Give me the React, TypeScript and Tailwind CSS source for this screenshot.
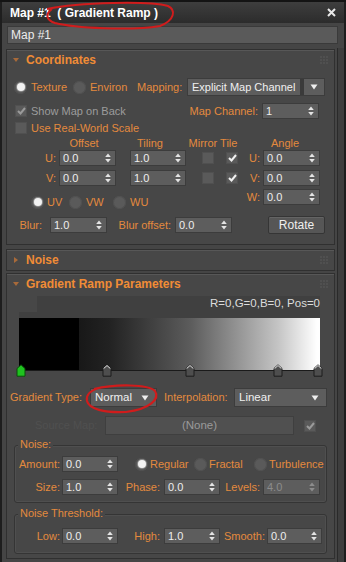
import React from "react";

const LBL = "shrink-0 text-right text-[#e48a3e]";

function Arrows({ dim }: { dim?: boolean }) {
  return (
    <svg width="6" height="10" viewBox="0 0 6 10" className="shrink-0">
      <path d="M3 0.5 L5.8 4 L0.2 4 Z M0.2 6 L5.8 6 L3 9.5 Z" fill={dim ? "#8c8c8c" : "#e4e4e4"} />
    </svg>
  );
}

function Spin({ v, cls, dim }: { v: string; cls: string; dim?: boolean }) {
  return (
    <div
      className={`flex h-[16px] shrink-0 items-center justify-between border border-[#3c3c3c] bg-[#5d5d5d] pl-[3px] pr-[4px] ${cls}`}
    >
      <span className={dim ? "text-[#8c8c8c]" : "text-[#eeeeee]"}>{v}</span>
      <Arrows dim={dim} />
    </div>
  );
}

function Drop({ v, cls }: { v: string; cls: string }) {
  return (
    <div
      className={`flex h-[19px] shrink-0 items-center whitespace-nowrap border border-[#3c3c3c] bg-[#5d5d5d] pl-[4px] text-[11.5px] text-[#f0f0f0] ${cls}`}
    >
      <span className="flex-1">{v}</span>
      <svg width="8" height="6" viewBox="0 0 8 6" className="mr-[7px] shrink-0">
        <path d="M0.5 0.5 L7.5 0.5 L4 5.5 Z" fill="#eeeeee" />
      </svg>
    </div>
  );
}

function Radio({ on }: { on?: boolean }) {
  return (
    <div className="flex h-[13px] w-[13px] shrink-0 items-center justify-center rounded-full bg-[#5a5a5a] shadow-[inset_0_0_0_1px_#505050]">
      {on && <div className="h-[8px] w-[8px] rounded-full bg-[#f2f2f2] shadow-[0_0_0_1px_#8a8a8a]" />}
    </div>
  );
}

function Check({ on, dim }: { on?: boolean; dim?: boolean }) {
  return (
    <div className="flex h-[12px] w-[12px] shrink-0 items-center justify-center bg-[#5a5a5a] shadow-[inset_0_0_0_1px_#505050]">
      {on && (
        <svg width="9" height="8" viewBox="0 0 9 8">
          <path
            d="M1 4 L3.5 6.5 L8 1"
            fill="none"
            stroke={dim ? "#9a9a9a" : "#f0f0f0"}
            strokeWidth="2"
          />
        </svg>
      )}
    </div>
  );
}

function Grip() {
  return (
    <svg width="8" height="8" viewBox="0 0 8 8" className="mr-[6px]">
      {[1, 4, 7].map((x) =>
        [1, 4, 7].map((y) => <rect key={`${x}-${y}`} x={x - 0.5} y={y - 0.5} width="1" height="1" fill="#6e6e6e" />)
      )}
    </svg>
  );
}

function Rollout({
  title,
  open,
  cls,
  children,
}: {
  title: string;
  open?: boolean;
  cls: string;
  children?: React.ReactNode;
}) {
  return (
    <div
      className={`ml-[4px] w-[329px] shrink-0 border border-[#303030] bg-[#474747] shadow-[inset_0_1px_0_#575757] ${cls}`}
    >
      <div className="flex h-[20px] items-center">
        <svg width="6" height="6" viewBox="0 0 6 6" className="ml-[6px] shrink-0">
          {open ? (
            <path d="M0 1 L6 1 L3 5 Z" fill="#a86a3a" />
          ) : (
            <path d="M1 0 L5 3 L1 6 Z" fill="#a86a3a" />
          )}
        </svg>
        <span className="ml-[7px] text-[12px] font-bold text-[#f08c36]">{title}</span>
        <div className="flex-1" />
        <Grip />
      </div>
      {children}
    </div>
  );
}

function Flag({ green }: { green?: boolean }) {
  return (
    <svg width="10" height="13" viewBox="0 0 10 13">
      <path
        d="M1 4.5 L5 0.8 L9 4.5 L9 12.2 L1 12.2 Z"
        fill={green ? "#1fc21f" : "#4e4e4e"}
        stroke={green ? "#0b4d0b" : "#1c1c1c"}
        strokeWidth="1"
      />
      {!green && <path d="M1.6 4.6 L5 1.5 L8.4 4.6" fill="none" stroke="#e8e8e8" strokeWidth="1" />}
    </svg>
  );
}

export default function App() {
  return (
    <div className="relative h-[562px] w-[346px] overflow-hidden bg-[#454545] font-['Liberation_Sans',Arial,sans-serif] text-[11px] leading-none">
      <div className="h-[2px] bg-[#141414]" />
      {/* title bar */}
      <div className="flex h-[21px] items-center border-x-2 border-[#1e1e1e] bg-gradient-to-b from-[#3e3e3e] to-[#2c2c2c]">
        <span className="ml-[8px] text-[12px] font-bold text-white">Map #1&nbsp;&nbsp;( Gradient Ramp )</span>
        <div className="flex-1" />
        <svg width="9" height="9" viewBox="0 0 9 9" className="mr-[8px]">
          <path d="M1 1 L8 8 M8 1 L1 8" stroke="#e8e8e8" strokeWidth="2" />
        </svg>
      </div>
      {/* name field */}
      <div className="h-[25px] border-x-2 border-[#1e1e1e] pt-[3px]">
        <div className="ml-[5px] flex h-[18px] w-[331px] items-center border border-[#3a3a3a] bg-[#5a5a5a] pl-[3px] text-[12px] text-[#ececec]">
          Map #1
        </div>
      </div>

      <div className="flex h-[514px] border-l-2 border-[#1e1e1e]">
        <div className="w-[332px] shrink-0">
          {/* Coordinates */}
          <Rollout title="Coordinates" open cls="mt-[1px]">
            <div className="mt-[8px] flex h-[18px] items-center pl-[7px]">
              <Radio on />
              <span className="ml-[4px] w-[40px] shrink-0 text-[#e48a3e]">Texture</span>
              <div className="ml-[2px]">
                <Radio />
              </div>
              <span className="ml-[4px] w-[40px] shrink-0 text-[#e48a3e]">Environ</span>
              <span className="ml-[7px] w-[46px] shrink-0 text-[#e48a3e]">Mapping:</span>
              <div className="ml-[4px] flex h-[18px] w-[138px] shrink-0 items-center whitespace-nowrap border border-[#3c3c3c] bg-[#5d5d5d] pl-[4px] text-[11px] text-[#f0f0f0]">
                <span className="flex-1">Explicit Map Channel</span>
                <div className="h-full w-[4px] bg-[#3a3a3a]" />
                <svg width="8" height="6" viewBox="0 0 8 6" className="mx-[6px] shrink-0">
                  <path d="M0.5 0.5 L7.5 0.5 L4 5.5 Z" fill="#eeeeee" />
                </svg>
              </div>
            </div>

            <div className="mt-[7px] flex h-[16px] items-center pl-[8px]">
              <Check on dim />
              <span className="ml-[4px] w-[120px] shrink-0 text-[#9c9c9c]">Show Map on Back</span>
              <span className={`${LBL} ml-[30px] w-[77px]`}>Map Channel:</span>
              <Spin v="1" cls="ml-[4px] w-[57px]" />
            </div>

            <div className="mt-[1px] flex h-[16px] items-center pl-[8px]">
              <Check />
              <span className="ml-[4px] shrink-0 text-[#e48a3e]">Use Real-World Scale</span>
            </div>

            <div className="flex h-[14px] items-center pl-[52px] text-[#e48a3e]">
              <span className="w-[50px] shrink-0 text-center">Offset</span>
              <span className="ml-[21px] w-[40px] shrink-0 text-center">Tiling</span>
              <span className="ml-[18px] w-[50px] shrink-0 text-center">Mirror Tile</span>
              <span className="ml-[27px] w-[40px] shrink-0 text-center">Angle</span>
            </div>

            <div className="flex h-[16px] items-center pl-[35px]">
              <span className={`${LBL} w-[14px]`}>U:</span>
              <Spin v="0.0" cls="ml-[3px] w-[57px]" />
              <Spin v="1.0" cls="ml-[14px] w-[56px]" />
              <div className="ml-[16px]">
                <Check />
              </div>
              <div className="ml-[12px]">
                <Check on />
              </div>
              <span className={`${LBL} ml-[8px] w-[14px]`}>U:</span>
              <Spin v="0.0" cls="ml-[3px] w-[57px]" />
            </div>

            <div className="mt-[4px] flex h-[16px] items-center pl-[35px]">
              <span className={`${LBL} w-[14px]`}>V:</span>
              <Spin v="0.0" cls="ml-[3px] w-[57px]" />
              <Spin v="1.0" cls="ml-[14px] w-[56px]" />
              <div className="ml-[16px]">
                <Check />
              </div>
              <div className="ml-[12px]">
                <Check on />
              </div>
              <span className={`${LBL} ml-[8px] w-[14px]`}>V:</span>
              <Spin v="0.0" cls="ml-[3px] w-[57px]" />
            </div>

            <div className="mt-[3px] flex h-[24px] items-start">
              <div className="mt-[6px] flex h-[14px] items-center pl-[24px] text-[#e48a3e]">
                <Radio on />
                <span className="ml-[3px] w-[18px] shrink-0">UV</span>
                <div className="ml-[4px]">
                  <Radio />
                </div>
                <span className="ml-[4px] w-[22px] shrink-0">VW</span>
                <div className="ml-[5px]">
                  <Radio />
                </div>
                <span className="ml-[4px] w-[22px] shrink-0">WU</span>
              </div>
              <div className="ml-[94px] flex h-[16px] items-center">
                <span className={`${LBL} w-[14px]`}>W:</span>
                <Spin v="0.0" cls="ml-[3px] w-[57px]" />
              </div>
            </div>

            <div className="mt-[3px] flex h-[18px] items-center pl-[5px]">
              <span className={`${LBL} w-[30px]`}>Blur:</span>
              <Spin v="1.0" cls="ml-[8px] w-[57px]" />
              <span className={`${LBL} ml-[6px] w-[58px]`}>Blur offset:</span>
              <Spin v="0.0" cls="ml-[4px] w-[57px]" />
              <div className="ml-[36px] flex h-[18px] w-[57px] shrink-0 items-center justify-center rounded-[2px] border border-[#353535] bg-[#565656] text-[12px] text-[#eeeeee] shadow-[inset_0_1px_0_#646464]">
                Rotate
              </div>
            </div>
            <div className="h-[10px]" />
          </Rollout>

          {/* Noise */}
          <Rollout title="Noise" cls="mt-[4px]" />

          {/* Gradient Ramp Parameters */}
          <Rollout title="Gradient Ramp Parameters" open cls="mt-[2px]">
            <div className="mt-[2px]">
              <div className="ml-[30px] flex h-[16px] w-[283px] items-center justify-end bg-[#404040] text-[11.5px] text-[#dcdcdc]">
                R=0,G=0,B=0, Pos=0
              </div>
              <div className="ml-[12px] h-[6px] w-[301px] bg-[#404040]" />
            </div>
            <div className="relative ml-[12px] w-[301px]">
              <div className="h-[53px] border-b border-[#1a1a1a] bg-[linear-gradient(to_right,#000_0%,#000_20%,#181818_20%,#222_30%,#5c5c5c_57%,#c4c4c4_86%,#fff_99%)]" />
              <div className="absolute left-[-3px] top-[46px]">
                <Flag green />
              </div>
              <div className="absolute left-[83px] top-[46px]">
                <Flag />
              </div>
              <div className="absolute left-[166px] top-[46px]">
                <Flag />
              </div>
              <div className="absolute left-[254px] top-[46px]">
                <Flag />
              </div>
              <div className="absolute left-[294px] top-[46px]">
                <Flag />
              </div>
            </div>

            <div className="mt-[17px] flex h-[19px] items-center pl-[3px]">
              <span className="w-[80px] shrink-0 text-[#e48a3e]">Gradient Type:</span>
              <Drop v="Normal" cls="w-[67px]" />
              <span className="ml-[7px] w-[68px] shrink-0 text-[#e48a3e]">Interpolation:</span>
              <Drop v="Linear" cls="ml-[2px] w-[93px]" />
            </div>

            <div className="mt-[9px] flex h-[19px] items-center pl-[28px]">
              <span className="w-[70px] shrink-0 text-[#505050]">Source Map:</span>
              <div className="flex h-[19px] w-[189px] shrink-0 items-center justify-center border border-[#3f3f3f] bg-[#505050] text-[11.5px] text-[#9a9a9a]">
                (None)
              </div>
              <div className="ml-[10px]">
                <Check on dim />
              </div>
            </div>

            {/* Noise group */}
            <div className="relative ml-[7px] mt-[10px] h-[58px] w-[313px] rounded-[3px] border border-[#353535] shadow-[inset_0_0_0_1px_#4f4f4f]">
              <span className="absolute left-[3px] top-[-7px] bg-[#474747] px-[2px] text-[#e48a3e]">Noise:</span>
              <div className="mt-[10px] flex h-[16px] items-center">
                <span className={`${LBL} w-[45px]`}>Amount:</span>
                <Spin v="0.0" cls="ml-[2px] w-[56px]" />
                <div className="ml-[17px]">
                  <Radio on />
                </div>
                <span className="ml-[2px] w-[40px] shrink-0 text-[#e48a3e]">Regular</span>
                <div className="ml-[4px]">
                  <Radio />
                </div>
                <span className="ml-[2px] w-[42px] shrink-0 text-[#e48a3e]">Fractal</span>
                <div className="ml-[3px]">
                  <Radio />
                </div>
                <span className="ml-[2px] shrink-0 text-[#e48a3e]">Turbulence</span>
              </div>
              <div className="mt-[7px] flex h-[16px] items-center">
                <span className={`${LBL} w-[45px]`}>Size:</span>
                <Spin v="1.0" cls="ml-[2px] w-[56px]" />
                <span className={`${LBL} ml-[4px] w-[38px]`}>Phase:</span>
                <Spin v="0.0" cls="ml-[4px] w-[56px]" />
                <span className={`${LBL} ml-[4px] w-[36px]`}>Levels:</span>
                <Spin v="4.0" dim cls="ml-[3px] w-[57px]" />
              </div>
            </div>

            {/* Noise Threshold group */}
            <div className="relative ml-[7px] mt-[11px] h-[40px] w-[313px] rounded-[3px] border border-[#353535] shadow-[inset_0_0_0_1px_#4f4f4f]">
              <span className="absolute left-[3px] top-[-7px] bg-[#474747] px-[2px] text-[#e48a3e]">Noise Threshold:</span>
              <div className="mt-[13px] flex h-[16px] items-center">
                <span className={`${LBL} w-[45px]`}>Low:</span>
                <Spin v="0.0" cls="ml-[2px] w-[56px]" />
                <span className={`${LBL} ml-[4px] w-[38px]`}>High:</span>
                <Spin v="1.0" cls="ml-[4px] w-[56px]" />
                <span className={`${LBL} ml-[4px] w-[40px]`}>Smooth:</span>
                <Spin v="0.0" cls="ml-[3px] w-[55px]" />
              </div>
            </div>
            <div className="h-[4px]" />
          </Rollout>
        </div>
        {/* right strip */}
        <div className="ml-[3px] flex-1 border-l border-r-2 border-l-[#2a2a2a] border-r-[#1e1e1e] bg-[#3e3e3e]" />
      </div>

      {/* red annotation marks */}
      <svg className="pointer-events-none absolute left-0 top-0" width="346" height="562" viewBox="0 0 346 562">
        <path
          d="M47 9 C80 2 150 1 168 6 C176 10 175 20 160 26 C130 31 75 28 55 23 C46 20 45 14 52 9"
          fill="none"
          stroke="#d01c1c"
          strokeWidth="2"
        />
        <path
          d="M94 389 C115 384 148 384 155 391 C160 399 150 409 126 412 C104 413 89 409 87 401 C86 395 89 391 99 388"
          fill="none"
          stroke="#d01c1c"
          strokeWidth="2.2"
        />
      </svg>
    </div>
  );
}
